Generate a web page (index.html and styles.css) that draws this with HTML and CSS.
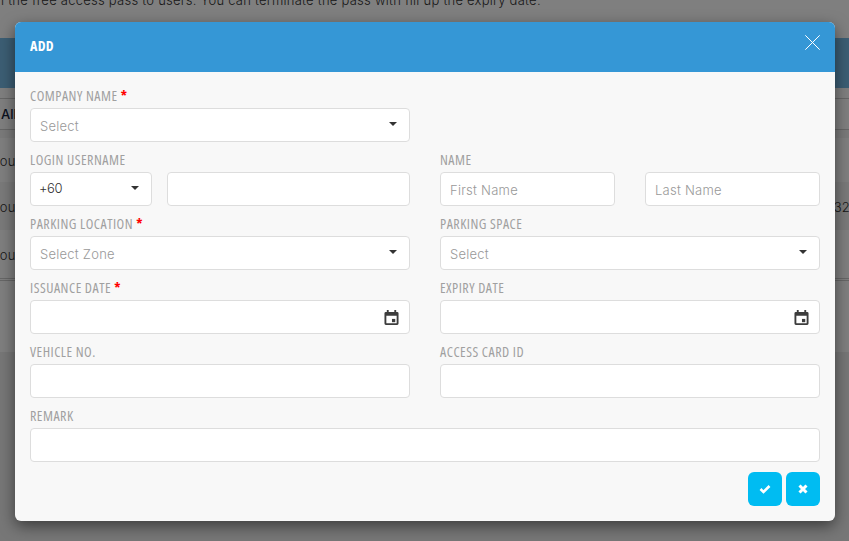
FILE: index.html
```html
<!DOCTYPE html>
<html lang="en">
<head>
<meta charset="utf-8">
<title>Add</title>
<link rel="stylesheet" href="styles.css">
</head>
<body>
<div class="page">
  <p class="intro">l the free access pass to users. You can terminate the pass with fill up the expiry date.</p>
  <div class="band"></div>
  <div class="thead">All</div>
  <div class="spacer"></div>
  <div class="row first">rou</div>
  <div class="row alt">rou<span class="row-end">32</span></div>
  <div class="row last">rou</div>
</div>
<div class="backdrop"></div>
<div class="modal">
  <header class="modal-head">
    <h1 class="modal-title">ADD</h1>
    <svg class="close" viewBox="0 0 15 15" width="15" height="15"><path d="M.3.3l14.400 14.400M14.700.3L.3 14.700" fill="none" stroke="#fff" stroke-width="1"/></svg>
  </header>
  <form class="modal-body">
    <div class="grid">
      <div class="field">
        <label class="label">COMPANY NAME <b class="req">*</b></label>
        <div class="control select"><span class="ph">Select</span><i class="caret"></i></div>
      </div>
      <div class="field"></div>

      <div class="field">
        <label class="label">LOGIN USERNAME</label>
        <div class="login">
          <div class="control select code"><span class="val">+60</span><i class="caret"></i></div>
          <div class="control"></div>
        </div>
      </div>
      <div class="field">
        <label class="label">NAME</label>
        <div class="names">
          <div class="control"><span class="ph">First Name</span></div>
          <div class="control"><span class="ph">Last Name</span></div>
        </div>
      </div>

      <div class="field">
        <label class="label">PARKING LOCATION <b class="req">*</b></label>
        <div class="control select"><span class="ph">Select Zone</span><i class="caret"></i></div>
      </div>
      <div class="field">
        <label class="label">PARKING SPACE</label>
        <div class="control select"><span class="ph">Select</span><i class="caret"></i></div>
      </div>

      <div class="field">
        <label class="label">ISSUANCE DATE <b class="req">*</b></label>
        <div class="control select"><span></span>
          <svg class="cal" viewBox="0 0 16 16" width="15" height="15"><path d="M3 0h2v2h6V0h2v2h1a1.500 1.500 0 0 1 1.500 1.500v11A1.500 1.500 0 0 1 14 16H2a1.500 1.500 0 0 1-1.500-1.500v-11A1.500 1.500 0 0 1 2 2h1zM2.500 6v8h11V6z" fill="#3c3c3c"/><rect x="8.500" y="9.500" width="3.500" height="3.500" fill="#3c3c3c"/></svg>
        </div>
      </div>
      <div class="field">
        <label class="label">EXPIRY DATE</label>
        <div class="control select"><span></span>
          <svg class="cal" viewBox="0 0 16 16" width="15" height="15"><path d="M3 0h2v2h6V0h2v2h1a1.500 1.500 0 0 1 1.500 1.500v11A1.500 1.500 0 0 1 14 16H2a1.500 1.500 0 0 1-1.500-1.500v-11A1.500 1.500 0 0 1 2 2h1zM2.500 6v8h11V6z" fill="#3c3c3c"/><rect x="8.500" y="9.500" width="3.500" height="3.500" fill="#3c3c3c"/></svg>
        </div>
      </div>

      <div class="field">
        <label class="label">VEHICLE NO.</label>
        <div class="control"></div>
      </div>
      <div class="field">
        <label class="label">ACCESS CARD ID</label>
        <div class="control"></div>
      </div>

      <div class="field wide">
        <label class="label">REMARK</label>
        <div class="control"></div>
      </div>
    </div>
    <div class="actions">
      <button type="button" class="btn"><svg viewBox="0 0 12 10" width="12" height="10"><path d="M1.500 5l3 3 6-6" fill="none" stroke="#fff" stroke-width="2.600"/></svg></button>
      <button type="button" class="btn"><svg viewBox="0 0 10 10" width="10" height="10"><path d="M1.500 1.500l7 7M8.500 1.500l-7 7" fill="none" stroke="#fff" stroke-width="3"/></svg></button>
    </div>
  </form>
</div>
</body>
</html>
```
FILE: styles.css
```css
* { box-sizing: border-box; }
html, body { margin: 0; height: 100%; }
body {
  width: 849px;
  height: 541px;
  overflow: hidden;
  position: relative;
  background: #eee;
  font-family: Inter, Roboto, sans-serif;
  color: #333;
}
.page { height: 352px; overflow: hidden; font-size: 13px; font-weight: 300; letter-spacing: .25px; background: #fff; }
.intro { margin: -7px 0 0; padding-left: 1px; height: 45px; white-space: nowrap; font-size: 13px; line-height: 14px; }
.band { height: 50px; background: #78bce8; }
.thead { height: 32px; margin-top: 10px; padding-left: 1px; border-top: 1px solid #ccc; border-bottom: 1px solid #ccc; line-height: 30px; font-weight: 500; color: #14233f; letter-spacing: 0; }
.spacer { height: 8px; background: #f4f4f4; }
.row { height: 48px; padding-top: 17px; position: relative; margin-left: -5px; }
.row.first { height: 44px; padding-top: 15px; }
.row.alt { background: #f4f4f4; }
.row.last { height: 51px; border-bottom: 3px double #ccc; }
.row-end { position: absolute; right: -1px; top: 17px; }
.backdrop { position: absolute; inset: 0; background: rgba(0, 0, 0, .5); }
.modal {
  position: absolute;
  left: 15px;
  top: 22px;
  width: 820px;
  height: 499px;
  background: #f8f8f8;
  border-radius: 6px;
  overflow: hidden;
  box-shadow: 0 5px 15px rgba(0, 0, 0, .5);
}
.modal-head {
  height: 50px;
  background: #3597d6;
  display: flex;
  align-items: flex-start;
  justify-content: space-between;
  padding: 13px 15px 0;
}
.modal-title {
  margin: 4px 0 0;
  font: 700 14px/14px "Open Sans", sans-serif;
  font-stretch: 80%;
  letter-spacing: .3px;
  color: #fff;
}
.modal-body { padding: 15px 15px 0; }
.grid { display: grid; grid-template-columns: 380px 380px; column-gap: 30px; row-gap: 9px; }
.field { min-height: 55px; }
.field.wide { grid-column: 1 / -1; }
.label {
  display: block;
  height: 21px;
  font: 500 14px/18px "Open Sans", sans-serif;
  font-stretch: 80%;
  letter-spacing: .5px;
  color: #a0a0a0;
}
.req { color: #f00; font-weight: 700; }
.control {
  height: 34px;
  background: #fff;
  border: 1px solid #ddd;
  border-radius: 4px;
  padding: 0 9px;
  display: flex;
  align-items: center;
  justify-content: space-between;
  font-size: 13px;
  font-weight: 300;
  letter-spacing: .25px;
}
.ph { color: #999; position: relative; top: 1px; }
.val { color: #333; letter-spacing: -.4px; position: relative; top: -1px; left: -1px; }
.caret {
  width: 0;
  height: 0;
  border-left: 4px solid transparent;
  border-right: 4px solid transparent;
  border-top: 4px solid #333;
  margin: 0 3px 2px 0;
}
.cal { margin-right: 1px; }
.login { display: grid; grid-template-columns: 122px 243px; column-gap: 15px; }
.names { display: grid; grid-template-columns: 175px 175px; column-gap: 30px; }
.actions { display: flex; justify-content: flex-end; gap: 4px; margin-top: 10px; }
.btn {
  width: 34px;
  height: 34px;
  padding: 0;
  border: 0;
  border-radius: 6px;
  background: #00bcf2;
  display: flex;
  align-items: center;
  justify-content: center;
}
```
